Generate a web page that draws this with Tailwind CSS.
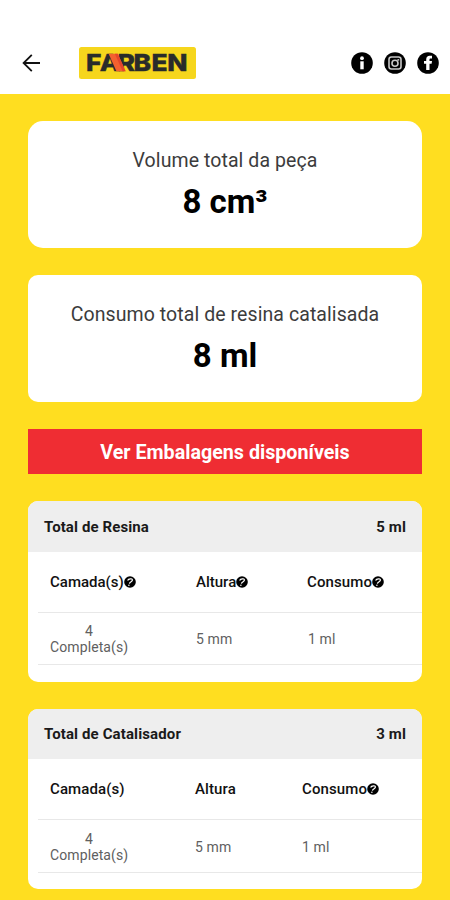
<!DOCTYPE html>
<html lang="pt-BR">
<head>
  <meta charset="UTF-8" />
  <meta name="viewport" content="width=device-width, initial-scale=1.0" />
  <title>Farben | Calculadora de Resina</title>
  <script src="https://cdn.jsdelivr.net/npm/@tailwindcss/browser@4"></script>
</head>
<body class="bg-[#ffde20] font-['Roboto',sans-serif] text-black">

<svg class="hidden">
  <symbol id="help" viewBox="0 0 12 12">
    <circle cx="6" cy="6" r="5.8" fill="#000" />
    <path d="M3.6 4.5C4.4 2.6 8.6 2.1 8.4 4.2C8.2 5.7 5.8 5.6 5.4 7.6" fill="none" stroke="#fff" stroke-width="1.2" />
    <circle cx="4.9" cy="9.2" r=".75" fill="#fff" />
  </symbol>
</svg>

<div class="h-[900px] overflow-hidden">
  <header class="flex h-[94px] items-start bg-white pt-[46px] pl-5 pr-[11px]">
    <a href="#" class="mt-1.5">
      <svg class="h-[22px] w-[22px]" viewBox="0 0 22 22" fill="none" stroke="#111" stroke-width="1.8">
        <path d="M20 11H4M11.8 2.8L3.6 11L11.8 19.2" />
      </svg>
    </a>

    <!-- Logo -->
    <svg class="ml-[37px] h-[34px] w-[117px]" viewBox="0 0 117 34">
      <rect x="0" y="1" width="117" height="32" rx="2.5" fill="#f6d61d" />
      <g transform="scale(1.12 1)">
        <text class="font-['Inter',sans-serif] text-[23.6px] font-extrabold" x="6.2 18.6 34.4 48.6 64.7 78.9" y="25" fill="#292b2b" stroke="#292b2b" stroke-width=".4">FARBEN</text>
      </g>
      <path d="M29.6 7.7H38.8L46.6 25.2H37.4Z" fill="#f4602f" />
      <path d="M35.8 7.7H38.8L46.6 25.2H43.6Z" fill="#e5452c" />
    </svg>

    <div class="ml-auto mt-1.5 flex gap-[11px]">
      <svg class="h-[22px] w-[22px]" viewBox="0 0 22 22">
        <circle cx="11" cy="11" r="10.8" fill="#000" />
        <circle cx="11" cy="6.2" r="1.9" fill="#fff" />
        <path d="M9.3 9.3H12.7V17.3H9.3Z" fill="#fff" />
      </svg>
      <svg class="h-[22px] w-[22px]" viewBox="0 0 22 22" fill="none" stroke="#c8c8c8" stroke-width="1.6">
        <circle cx="11" cy="11" r="10.8" fill="#000" stroke="none" />
        <rect x="5" y="5" width="12" height="12" rx="2.4" />
        <circle cx="11" cy="11.2" r="3" />
        <path d="M13.4 7.9H15.2" />
      </svg>
      <svg class="h-[22px] w-[22px]" viewBox="0 0 22 22">
        <circle cx="11" cy="11" r="10.8" fill="#000" />
        <path d="M9.2 18V11.8H7V9H9.2V7.4C9.2 5 10.6 3.8 12.6 3.8H15V6.6H13.6C12.8 6.6 12.5 7 12.5 7.7V9H15L14.6 11.8H12.5V18Z" fill="#fff" />
      </svg>
    </div>
  </header>

  <main class="flex flex-col px-7 pt-[27px]">
    <section class="h-[127px] rounded-[15px] bg-white pt-7 text-center">
      <p class="text-[19.5px] leading-6 tracking-[0.08px] text-[#3c3c3c]">Volume total da peça</p>
      <p class="mt-[9px] text-[33px] leading-10 font-bold">8 cm³</p>
    </section>

    <section class="mt-[27px] h-[127px] rounded-[10px] bg-white pt-7 text-center">
      <p class="text-[19.5px] leading-6 tracking-[0.08px] text-[#3c3c3c]">Consumo total de resina catalisada</p>
      <p class="mt-[9px] text-[33px] leading-10 font-bold">8 ml</p>
    </section>

    <button class="mt-[27px] h-[45px] bg-[#ef2d33] pt-0.5 text-[19.7px] font-bold text-white">Ver Embalagens disponíveis</button>

    <section class="mt-[27px] h-[181px] overflow-hidden rounded-[10px] bg-white">
      <div class="flex h-[51px] items-center justify-between bg-[#eee] px-4 pt-0.5 text-[15px] font-bold tracking-[0.1px] text-[#1a1a1a]">
        <h2>Total de Resina</h2>
        <span>5 ml</span>
      </div>
      <div class="ml-[10px] text-[15px]">
        <div class="grid h-[61px] grid-cols-[146px_111px_1fr] items-center border-b border-[#e8e8e8] pl-3 font-medium text-[#111]">
          <span class="flex items-center">Camada(s)<svg class="h-3 w-3"><use href="#help" /></svg></span>
          <span class="flex items-center">Altura<svg class="h-3 w-3"><use href="#help" /></svg></span>
          <span class="flex items-center tracking-[0.1px]">Consumo<svg class="h-3 w-3"><use href="#help" /></svg></span>
        </div>
        <div class="grid h-[52px] grid-cols-[146px_112px_1fr] items-center border-b border-[#e8e8e8] pl-3 text-[14px] leading-4 tracking-[0.1px] text-[#606060]">
          <span class="w-[78px] text-center">4<br>Completa(s)</span>
          <span>5 mm</span>
          <span>1 ml</span>
        </div>
      </div>
    </section>

    <section class="mt-[27px] h-[180px] overflow-hidden rounded-[10px] bg-white">
      <div class="flex h-[50px] items-center justify-between bg-[#eee] px-4 text-[15px] font-bold tracking-[0.12px] text-[#1a1a1a]">
        <h2>Total de Catalisador</h2>
        <span>3 ml</span>
      </div>
      <div class="ml-[10px] text-[15px]">
        <div class="grid h-[61px] grid-cols-[145px_107px_1fr] items-center border-b border-[#e8e8e8] pl-3 font-medium tracking-[0.1px] text-[#111]">
          <span>Camada(s)</span>
          <span>Altura</span>
          <span class="flex items-center">Consumo<svg class="h-3 w-3"><use href="#help" /></svg></span>
        </div>
        <div class="grid h-[53px] grid-cols-[145px_107px_1fr] items-center border-b border-[#e8e8e8] pt-px pl-3 text-[14px] leading-4 tracking-[0.1px] text-[#606060]">
          <span class="w-[78px] text-center">4<br>Completa(s)</span>
          <span>5 mm</span>
          <span>1 ml</span>
        </div>
      </div>
    </section>
  </main>
</div>

</body>
</html>
